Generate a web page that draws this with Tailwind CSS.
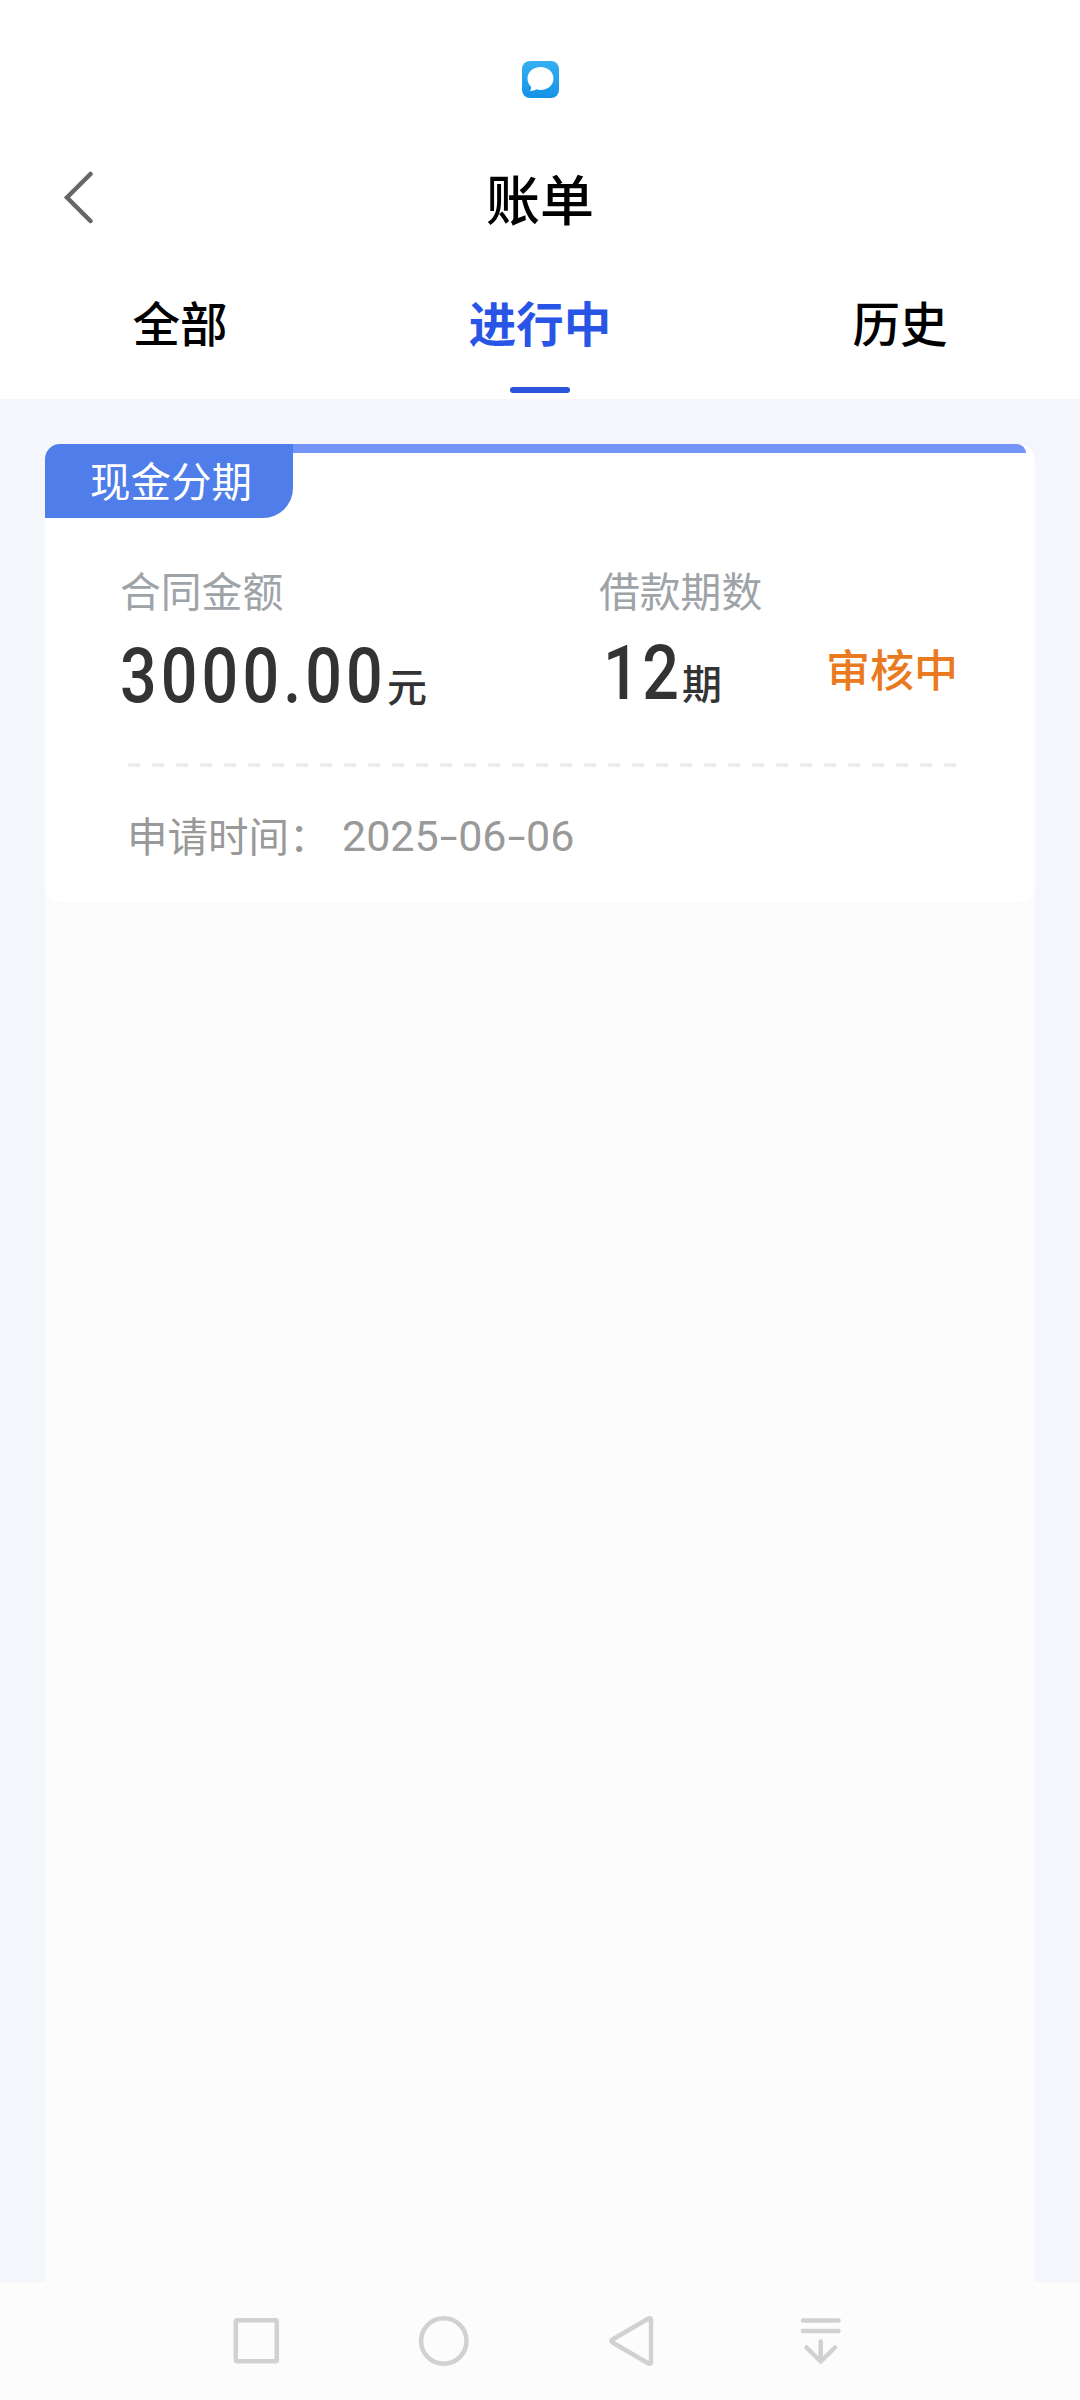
<!DOCTYPE html>
<html lang="zh-CN">
<head>
    <meta charset="UTF-8">
    <meta name="viewport" content="width=device-width, initial-scale=1.0">
    <title>账单</title>
    <script src="https://cdn.jsdelivr.net/npm/@tailwindcss/browser@4"></script>
</head>
<body class="bg-[#f5f6fc] font-['Noto_Sans_CJK_SC',sans-serif]">
    <div class="w-[1080px] h-[2400px] flex flex-col overflow-hidden">

        <!-- header -->
        <header class="h-[399px] bg-white flex flex-col shrink-0">
            <div class="h-[158px] pt-[61px] flex justify-center items-start">
                <svg class="w-[37px] h-[37px]" viewBox="0 0 37 37">
                    <defs>
                        <linearGradient id="chat" x1="0" y1="0" x2="0" y2="1">
                            <stop offset="0" stop-color="#35b0f3"/>
                            <stop offset="1" stop-color="#1592e6"/>
                        </linearGradient>
                    </defs>
                    <rect width="37" height="37" rx="8" fill="url(#chat)"/>
                    <path d="M18.500 6C26 6 31.500 11 31.500 17.500S26 29 18.500 29C17 29 15.500 28.700 14.200 28.300C12.500 29.500 10.500 30.200 8 30C9 28.800 9.300 27.300 9 25.600C6.800 23.500 5.500 20.700 5.500 17.500C5.500 11 11 6 18.500 6Z" fill="#fff"/>
                </svg>
            </div>
            <div class="h-[80px] grid grid-cols-3 items-center">
                <svg class="w-[34px] h-[54px] ml-[62px] -mt-[2px]" viewBox="0 0 34 54" fill="none" stroke="#666" stroke-width="4.500" stroke-linecap="round">
                    <path d="M28.500 4L5 27.500L28.500 51"/>
                </svg>
                <h1 class="text-[54px] leading-[80px] font-medium text-center text-black">账单</h1>
            </div>
            <nav class="h-[161px] grid grid-cols-3 text-center text-[47.5px] leading-[70px] text-black pt-[49px]">
                <div class="font-medium">全部</div>
                <div class="flex flex-col items-center font-bold text-[#2955e7]">
                    <span>进行中</span>
                    <span class="w-[60px] h-[6px] rounded-full bg-[#2b54dc] mt-[30px]"></span>
                </div>
                <div class="font-medium">历史</div>
            </nav>
        </header>

        <main class="grow px-[45px] pt-[45px] flex flex-col">
            <div class="grow flex flex-col bg-linear-to-b from-transparent from-[16px] to-[#fbfbfb] to-[16px] rounded-t-2xl">
                <!-- card -->
                <section class="h-[458px] bg-white rounded-[16px] flex flex-col">
                    <div class="flex items-start pr-[9px]">
                        <div class="w-[248px] h-[74px] rounded-tl-[15px] rounded-br-[30px] bg-[#4f7dea] text-white text-[40.5px] leading-[72px] text-center pl-[4px]">现金分期</div>
                        <div class="grow h-[9px] rounded-tr-[9px] bg-[#7594f8]"></div>
                    </div>
                    <div class="flex px-[75px] mt-[42px]">
                        <div class="w-[479px]">
                            <div class="text-[40.8px] leading-[60px] text-[#9ea3a8]">合同金额</div>
                            <div class="flex items-baseline text-[#333] leading-[84px] h-[84px] mt-[14px] font-medium whitespace-nowrap"><span class="inline-block w-[267px] origin-left scale-x-85 font-[Roboto] text-[76px] tracking-[4.800px]">3000.00</span><span class="text-[40px]">元</span></div>
                        </div>
                        <div class="w-[227px]">
                            <div class="text-[40.8px] leading-[60px] text-[#9ea3a8]">借款期数</div>
                            <div class="flex items-baseline text-[#333] leading-[84px] h-[84px] mt-[11px] font-medium whitespace-nowrap"><span class="inline-block w-[79px] ml-[4px] origin-left scale-x-85 font-[Roboto] text-[76px] tracking-[3px]">12</span><span class="text-[40px]">期</span></div>
                        </div>
                        <div class="text-[44px] leading-[60px] text-[#ea7a20] font-medium pt-[78px] whitespace-nowrap">审核中</div>
                    </div>
                    <svg class="w-[828px] h-[4px] ml-[83px] mt-[45px]" viewBox="0 0 828 4">
                        <path d="M0 2H828" stroke="#ebebeb" stroke-width="3.500" stroke-dasharray="12 12"/>
                    </svg>
                    <div class="flex items-center ml-[82px] mt-[37px] leading-[60px] text-[#999]">
                        <span class="w-[215px] text-[40.5px]">申请时间：</span>
                        <span class="font-[Roboto] text-[43px] pt-[2px]">2025<span class="inline-block w-[19.500px] text-center scale-x-150">-</span>06<span class="inline-block w-[19.500px] text-center scale-x-150">-</span>06</span>
                    </div>
                </section>
            </div>
        </main>

        <!-- system navigation -->
        <footer class="h-[118px] bg-[#fcfcfc] shrink-0 flex items-start pt-[32px] pl-[228px] gap-[132px]">
            <svg class="w-14 h-14" viewBox="0 0 56 56" fill="none" stroke="#d1d1d1" stroke-width="4.500">
                <rect x="7.800" y="6.300" width="41" height="41" rx="1.500"/>
            </svg>
            <svg class="w-14 h-14" viewBox="0 0 56 56" fill="none" stroke="#d1d1d1" stroke-width="4.500">
                <circle cx="27.800" cy="27" r="22.700"/>
            </svg>
            <svg class="w-14 h-14" viewBox="0 0 56 56" fill="none" stroke="#d1d1d1" stroke-width="4.500" stroke-linejoin="round">
                <path d="M47 5.500V48.500Q46.500 50.500 44.500 49.500L8.500 28.500Q6.500 27 8.500 25.500L44.500 4.500Q46.500 3.500 47 5.500Z"/>
            </svg>
            <svg class="w-14 h-14" viewBox="0 0 56 56" fill="none" stroke="#d1d1d1" stroke-width="4.500" stroke-linecap="round" stroke-linejoin="round">
                <path d="M11 6.500H46.500M11 17H46.500M28.700 27.500V47.500M14.500 33.500L28.700 47.500L43 33.500"/>
            </svg>
        </footer>
    </div>
</body>
</html>
